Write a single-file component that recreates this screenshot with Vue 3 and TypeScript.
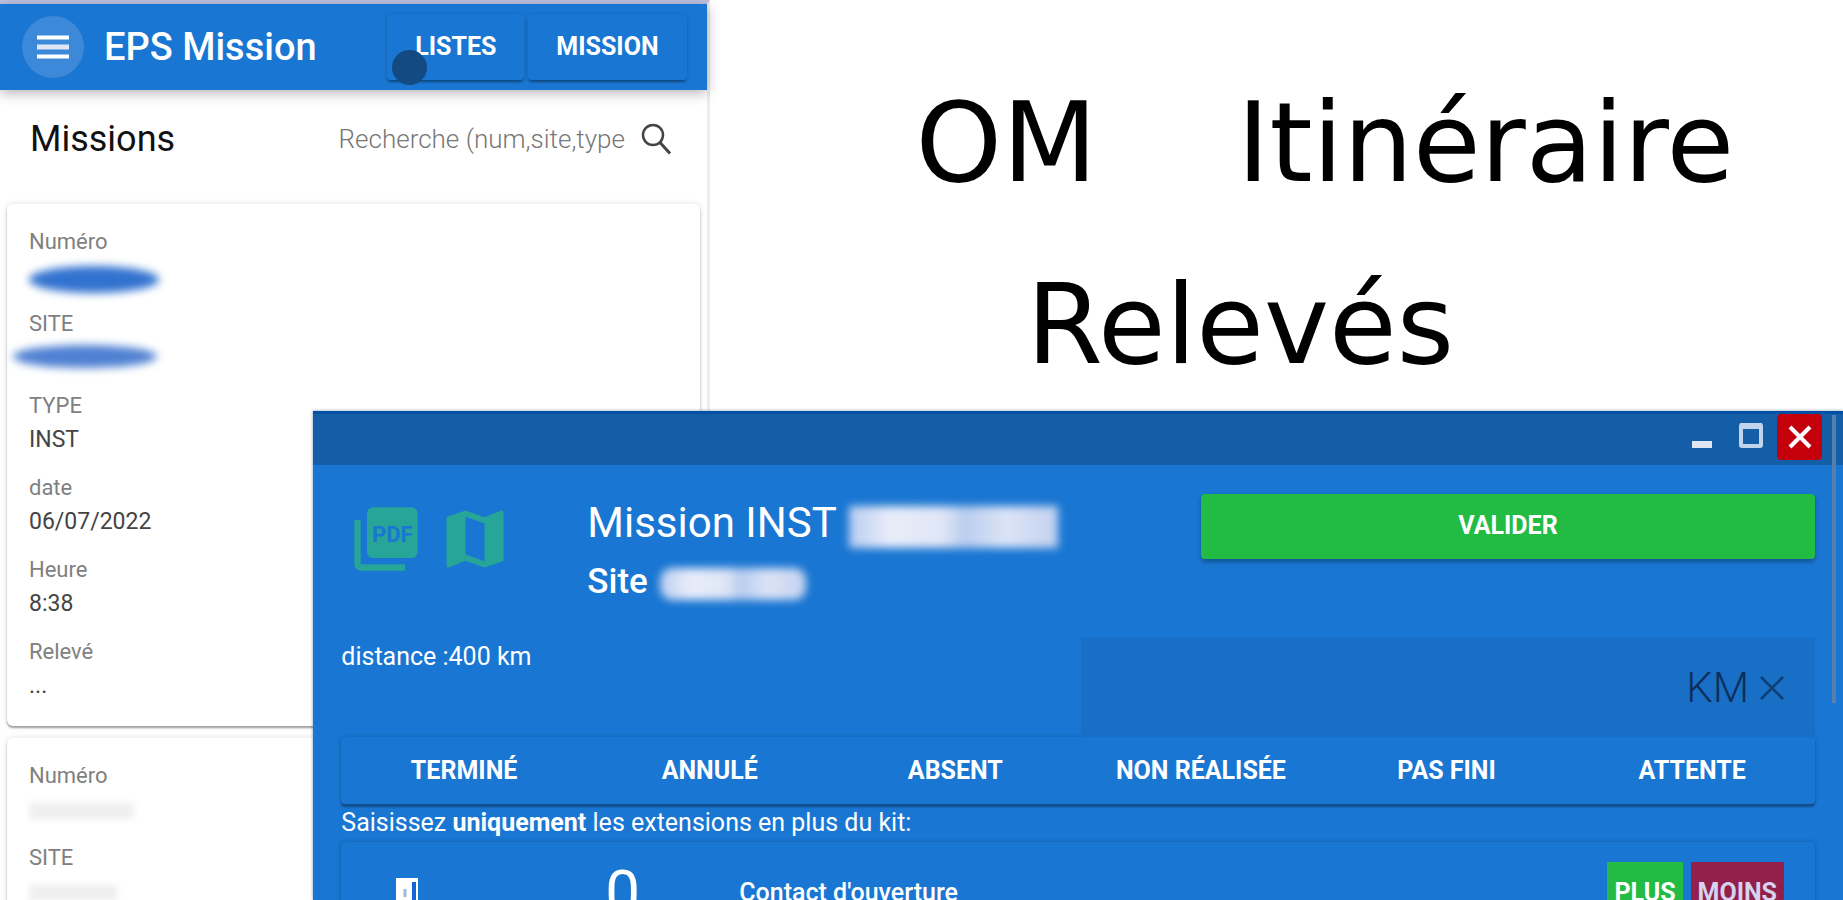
<script setup lang="ts">
interface Field {
  label: string
  value?: string
  mask?: string
}

const cards: Field[][] = [
  [
    { label: 'Numéro', mask: 'ink' },
    { label: 'SITE', mask: 'ink soft' },
    { label: 'TYPE', value: 'INST' },
    { label: 'date', value: '06/07/2022' },
    { label: 'Heure', value: '8:38' },
    { label: 'Relevé', value: '...' },
  ],
  [
    { label: 'Numéro', mask: 'pale' },
    { label: 'SITE', mask: 'pale short' },
  ],
]

const statuses: string[] = ['TERMINÉ', 'ANNULÉ', 'ABSENT', 'NON RÉALISÉE', 'PAS FINI', 'ATTENTE']
</script>

<template>
  <div class="stage">
    <section class="app">
      <header class="bar">
        <button class="menu" aria-label="Menu">
          <svg viewBox="0 0 32 24" width="32" height="24">
            <path d="M0 2.500h32M0 21.500h32" stroke="#fff" stroke-width="4" />
            <path d="M0 12h32" stroke="#dfe6f7" stroke-width="5" />
          </svg>
        </button>
        <h1 class="brand">EPS Mission</h1>
        <nav class="nav">
          <button class="flat">LISTES<span class="touch"></span></button>
          <button class="flat">MISSION</button>
        </nav>
      </header>
      <div class="tools">
        <h2 class="heading">Missions</h2>
        <input class="search" type="text" aria-label="Recherche" placeholder="Recherche (num,site,type" />
        <svg class="loupe" viewBox="0 0 32 32" width="32" height="32" fill="none" stroke="#444">
          <circle cx="13" cy="12" r="10" stroke-width="2.500" />
          <path d="M20 19.500l10 11" stroke-width="3" />
        </svg>
      </div>
      <article v-for="(card, c) in cards" :key="c" class="card">
        <div v-for="(f, i) in card" :key="i" class="field">
          <span class="label">{{ f.label }}</span>
          <span v-if="f.value" class="value">{{ f.value }}</span>
          <span v-else class="mask" :class="f.mask"></span>
        </div>
      </article>
    </section>

    <section class="hero">
      <p class="line"><span>OM</span><span>Itinéraire</span></p>
      <p class="line second">Relevés</p>
    </section>

    <section class="window">
      <header class="titlebar">
        <button class="ctl" aria-label="Réduire">
          <svg viewBox="0 0 24 26" width="24" height="26"><rect x="2" y="19" width="20" height="7" fill="#dfe7f5" /></svg>
        </button>
        <button class="ctl" aria-label="Agrandir">
          <svg viewBox="0 0 24 26" width="24" height="26" fill="none" stroke="#c2d3ec">
            <rect x="2" y="3" width="20" height="21" rx="1" stroke-width="4" />
            <path d="M1 4h22" stroke-width="6" />
          </svg>
        </button>
        <button class="ctl close" aria-label="Fermer">
          <svg viewBox="0 0 24 24" width="24" height="24"><path d="M2 2l20 20M22 2L2 22" stroke="#fff" stroke-width="4" /></svg>
        </button>
      </header>
      <div class="thumb"></div>
      <div class="body">
        <div class="top">
          <div class="icons">
            <button class="icon" aria-label="PDF">
              <svg viewBox="0 0 24 24" width="76" height="76">
                <path fill="#27a599" d="M20 2H8c-1.100 0-2 .9-2 2v12c0 1.100.9 2 2 2h12c1.100 0 2-.9 2-2V4c0-1.100-.9-2-2-2zM4 6H2v14c0 1.100.9 2 2 2h14v-2H4V6z" />
                <text class="pdf" x="14" y="13" text-anchor="middle">PDF</text>
              </svg>
            </button>
            <button class="icon" aria-label="Carte">
              <svg viewBox="0 0 24 24" width="76" height="76">
                <path fill="#27a599" d="M20.500 3l-.16.03L15 5.100 9 3 3.360 4.900c-.21.07-.36.25-.36.48V20.500c0 .28.22.5.5.5l.16-.03L9 18.900l6 2.100 5.640-1.900c.21-.07.36-.25.36-.48V3.500c0-.28-.22-.5-.5-.5zM15 19l-6-2.110V5l6 2.110V19z" />
              </svg>
            </button>
          </div>
          <div class="titles">
            <div class="title">Mission INST <span class="veil"></span></div>
            <div class="subtitle">Site <span class="veil small"></span></div>
          </div>
          <button class="validate">VALIDER</button>
        </div>
        <div class="distance-row">
          <span class="distance">distance :400 km</span>
          <div class="km">
            <input class="km-input" type="text" aria-label="Kilomètres" placeholder="KM" />
            <button class="clear" aria-label="Effacer">
              <svg viewBox="0 0 24 24" width="24" height="24"><path d="M1 1l22 22M23 1L1 23" stroke="#0f3f73" stroke-width="2.500" /></svg>
            </button>
          </div>
        </div>
        <div class="statuses">
          <button v-for="s in statuses" :key="s" class="status">{{ s }}</button>
        </div>
        <p class="hint">Saisissez <b>uniquement</b> les extensions en plus du kit:</p>
        <div class="item">
          <svg class="door" viewBox="0 0 24 28" width="24" height="28">
            <rect width="22" height="28" fill="#fff" />
            <path d="M16 4h4v24h-4z" fill="#1565d8" />
            <path d="M9 11v8" stroke="#9db8e0" stroke-width="3" />
          </svg>
          <span class="count">0</span>
          <span class="name">Contact d'ouverture</span>
          <span class="actions">
            <button class="plus">PLUS</button>
            <button class="minus">MOINS</button>
          </span>
        </div>
      </div>
    </section>
  </div>
</template>

<style>
body {
  margin: 0;
}
</style>

<style scoped>
.stage {
  position: relative;
  display: flex;
  height: 100vh;
  overflow: hidden;
  background: #fff;
  font-family: Roboto, 'Liberation Sans', sans-serif;
}
button {
  border: 0;
  padding: 0;
  background: none;
  color: inherit;
  font: inherit;
}
svg {
  display: block;
}
input {
  font: inherit;
  border: 0;
  outline: 0;
  background: none;
  padding: 0;
}
.app {
  box-sizing: border-box;
  width: 38.5%;
  border-top: 4px solid #c0c0e4;
  border-right: 3px solid #ededed;
}
.bar {
  display: flex;
  align-items: center;
  height: 86px;
  box-sizing: border-box;
  padding: 0 20px 0 22px;
  background: #1976d2;
  color: #fff;
  box-shadow: 0 3px 12px rgba(0, 0, 0, 0.3);
}
.menu {
  display: grid;
  place-items: center;
  width: 62px;
  height: 62px;
  border-radius: 50%;
  background: #3b89d8;
}
.brand {
  margin: 0 0 0 20px;
  font-size: 38px;
  font-weight: 500;
  white-space: nowrap;
}
.nav {
  display: flex;
  gap: 4px;
  margin-left: auto;
}
.flat {
  position: relative;
  height: 66px;
  padding: 0 28px 2px;
  font-size: 25px;
  font-weight: 700;
  border-radius: 4px;
  box-shadow: 0 3px 2px -1px rgba(0, 0, 0, 0.3), 0 1px 4px rgba(0, 0, 0, 0.16);
}
.touch {
  position: absolute;
  left: 5px;
  bottom: -5px;
  width: 35px;
  height: 35px;
  border-radius: 50%;
  background: #134a82;
}
.tools {
  display: flex;
  align-items: center;
  height: 98px;
  padding: 0 35px 0 30px;
}
.heading {
  margin: 0;
  font-size: 36px;
  font-weight: 400;
  color: #111;
}
.search {
  width: 290px;
  margin-left: auto;
  font-size: 26px;
  font-weight: 300;
  color: #555;
}
.search::placeholder {
  color: #777;
  opacity: 1;
}
.loupe {
  margin-left: 11px;
}
.card {
  margin: 16px 7px 0 7px;
  padding: 21px 22px 9px;
  border-radius: 6px;
  box-shadow: 0 2px 2px rgba(0, 0, 0, 0.35), 0 0 6px rgba(0, 0, 0, 0.12);
}
.card + .card {
  margin-top: 12px;
}
.field {
  display: flex;
  flex-direction: column;
  height: 82px;
  font-size: 23px;
  line-height: 34px;
}
.label {
  font-size: 22px;
  color: #808080;
}
.value {
  color: #444;
}
.mask {
  width: 105px;
  height: 16px;
  margin-top: 10px;
  background: #efefef;
  filter: blur(3px);
}
.ink {
  width: 130px;
  height: 27px;
  margin-top: 7px;
  border-radius: 50%;
  background: #3272cf;
  filter: blur(4px);
}
.soft {
  width: 144px;
  height: 23px;
  margin-top: 4px;
  margin-left: -16px;
  background: #4f80d2;
}
.short {
  width: 88px;
}
.hero {
  flex: 1;
  padding: 79px 0 0 206px;
  font-family: 'DejaVu Sans', sans-serif;
  color: #000;
}
.line {
  display: flex;
  gap: 140px;
  margin: 0;
  font-size: 110px;
  line-height: 128px;
}
.second {
  margin-top: 54px;
  padding-left: 111px;
}
.window {
  position: absolute;
  left: 17%;
  right: 0;
  top: 411px;
  bottom: 0;
  overflow: hidden;
  background: #1976d2;
  color: #fff;
  box-shadow: 0 0 3px rgba(0, 50, 120, 0.5);
}
.titlebar {
  display: flex;
  justify-content: flex-end;
  gap: 4px;
  box-sizing: border-box;
  height: 54px;
  padding-right: 21px;
  border-top: 3px solid #0250a5;
  background: #145ea8;
}
.ctl {
  display: grid;
  place-items: center;
  width: 45px;
  height: 42px;
}
.close {
  height: 46px;
  border-radius: 4px;
  background: #c5000d;
}
.thumb {
  position: absolute;
  top: 4px;
  right: 7px;
  width: 4px;
  height: 288px;
  background: #557fac;
}
.body {
  padding: 29px 28px 0;
}
.top {
  display: flex;
  align-items: flex-start;
  height: 144px;
}
.icons {
  display: flex;
  gap: 13px;
  width: 246px;
  padding: 7px 0 0 7px;
  box-sizing: border-box;
}
.pdf {
  font-size: 7px;
  font-weight: 700;
  fill: #1976d2;
}
.titles {
  flex: 1;
}
.title {
  display: flex;
  align-items: center;
  gap: 12px;
  font-size: 42px;
  line-height: 58px;
  white-space: nowrap;
}
.subtitle {
  display: flex;
  align-items: center;
  gap: 12px;
  font-size: 35px;
  font-weight: 500;
  line-height: 60px;
}
.veil {
  width: 209px;
  height: 42px;
  margin-top: 8px;
  background: linear-gradient(90deg, #b9cdf0, #e9edf9 20%, #dfe6f6 45%, #b9cdee 55%, #dce4f6 75%, #c2d1ef);
  filter: blur(4px);
}
.small {
  width: 146px;
  height: 32px;
  margin-top: 3px;
  border-radius: 12px;
}
.validate {
  width: 614px;
  height: 65px;
  padding-bottom: 2px;
  border-radius: 4px;
  background: #22bb44;
  font-size: 25px;
  font-weight: 700;
  box-shadow: 0 3px 4px rgba(0, 0, 0, 0.3);
}
.distance-row {
  display: flex;
  justify-content: space-between;
  height: 99px;
}
.distance {
  font-size: 25px;
  line-height: 38px;
}
.km {
  display: flex;
  align-items: center;
  justify-content: flex-end;
  gap: 11px;
  width: 734px;
  box-sizing: border-box;
  padding-right: 31px;
  background: #196fc6;
}
.km-input {
  flex: 1;
  min-width: 0;
  font-size: 42px;
  font-weight: 300;
  text-align: right;
  color: #0c2f5c;
}
.km-input::placeholder {
  color: #0c2f5c;
  opacity: 1;
}
.statuses {
  display: grid;
  grid-template-columns: repeat(6, 1fr);
  height: 67px;
  border-radius: 4px;
  background: #1976d2;
  box-shadow: 0 3px 2px rgba(0, 0, 0, 0.3), 0 0 5px rgba(0, 0, 0, 0.14);
}
.status {
  font-size: 25px;
  font-weight: 700;
}
.hint {
  margin: 0;
  font-size: 25px;
  line-height: 38px;
}
.item {
  display: flex;
  align-items: center;
  height: 100px;
  border-radius: 4px;
  padding: 0 31px 0 55px;
  box-shadow: 0 0 4px rgba(0, 0, 0, 0.22);
}
.count {
  margin-left: 185px;
  width: 134px;
  font-size: 62px;
  font-weight: 400;
}
.name {
  font-size: 25px;
  font-weight: 500;
}
.actions {
  display: flex;
  gap: 8px;
  margin-left: auto;
}
.plus,
.minus {
  height: 60px;
  padding: 0 7px;
  font-size: 25px;
  font-weight: 700;
}
.plus {
  background: #22bb44;
}
.minus {
  background: #92204a;
  color: #d6d3ee;
}
</style>
